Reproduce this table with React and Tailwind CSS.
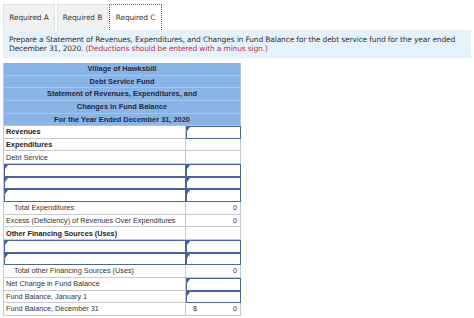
import React from "react";

const HEAD = [
  "Village of Hawksbill",
  "Debt Service Fund",
  "Statement of Revenues, Expenditures, and",
  "Changes in Fund Balance",
  "For the Year Ended December 31, 2020",
];

// kind: "label" | "bold" | "input"; right: "input" for an entry cell
const ROWS = [
  { kind: "bold", text: "Revenues", right: "input" },
  { kind: "bold", text: "Expenditures" },
  { kind: "label", text: "Debt Service" },
  { kind: "input", right: "input" },
  { kind: "input", right: "input" },
  { kind: "input", right: "input" },
  { kind: "label", text: "Total Expenditures", indent: true, value: "0" },
  { kind: "label", text: "Excess (Deficiency) of Revenues Over Expenditures", value: "0" },
  { kind: "bold", text: "Other Financing Sources (Uses)" },
  { kind: "input", right: "input" },
  { kind: "input", right: "input" },
  { kind: "label", text: "Total other Financing Sources (Uses)", indent: true, value: "0" },
  { kind: "label", text: "Net Change in Fund Balance", right: "input" },
  { kind: "label", text: "Fund Balance, January 1", right: "input" },
  { kind: "label", text: "Fund Balance, December 31", value: "0", dollar: true },
];

function Marker() {
  return (
    <span className="absolute left-0 top-0 w-0 h-0 border-t-[4px] border-r-[3px] border-t-[#3b5d96] border-r-transparent" />
  );
}

function Row({ row }) {
  const isInputLeft = row.kind === "input";
  const isInputRight = row.right === "input";
  return (
    <div className="flex h-[12.65px]">
      <div
        className={
          isInputLeft
            ? "relative w-[182px] border border-[#4a6694] bg-white"
            : "relative w-[182px] border-b border-r border-[#c8c8c8] bg-white flex items-center"
        }
      >
        {isInputLeft && <Marker />}
        {!isInputLeft && (
          <span
            className={
              (row.kind === "bold" ? "font-bold text-[#222] " : "text-[#333] ") +
              (row.indent ? "pl-[10px]" : "pl-[2px]") +
              " text-[7.3px] leading-none whitespace-nowrap"
            }
          >
            {row.text}
          </span>
        )}
      </div>
      <div
        className={
          isInputRight
            ? "relative flex-1 border border-[#4a6694] bg-white"
            : "relative flex-1 border-b border-r border-[#c8c8c8] bg-white flex items-center justify-between px-[3px]"
        }
      >
        {isInputRight && <Marker />}
        {!isInputRight && (
          <>
            <span className="text-[7.3px] leading-none text-[#333] pl-[4px]">{row.dollar ? "$" : ""}</span>
            <span className="text-[7.3px] leading-none text-[#333]">{row.value || ""}</span>
          </>
        )}
      </div>
    </div>
  );
}

export default function App() {
  return (
    <div className="w-[474px] h-[318px] bg-white overflow-hidden font-['Liberation_Sans',Arial,sans-serif]">
      {/* tabs */}
      <div className="flex pl-[3px] pt-[4px] h-[30px] font-['DejaVu_Sans',Verdana,sans-serif] text-[7.4px] tracking-[-0.1px] text-[#333]">
        <div className="w-[52px] bg-[#f1f1f1] border border-[#e0e0e0] border-b-0 flex items-center justify-center">
          Required A
        </div>
        <div className="w-[51px] ml-[2px] bg-[#f1f1f1] border border-[#e0e0e0] border-b-0 flex items-center justify-center">
          Required B
        </div>
        <div className="w-[53px] ml-[1px] bg-white border border-dotted border-[#3a5f9a] border-b-0 flex items-center justify-center">
          Required C
        </div>
      </div>

      {/* instructions */}
      <div className="mx-[3px] bg-[#e5f1fb] px-[6px] pt-[5px] pb-[5px] font-['DejaVu_Sans',Verdana,sans-serif] text-[7.5px] tracking-[-0.15px] leading-[9px] text-[#333]">
        Prepare a Statement of Revenues, Expenditures, and Changes in Fund Balance for the debt service fund for the year ended December 31, 2020.{" "}
        <span className="text-[#c0364f]">(Deductions should be entered with a minus sign.)</span>
      </div>

      {/* statement */}
      <div className="ml-[3px] mt-[5px] w-[238px] border-l border-[#c8c8c8]">
        {HEAD.map((h) => (
          <div
            key={h}
            className="h-[12.65px] bg-[#8ab3e6] border-b border-r border-[#a9c6ea] flex items-center justify-center text-[7.4px] font-bold text-[#1e2a44] leading-none"
          >
            {h}
          </div>
        ))}
        {ROWS.map((r, i) => (
          <Row key={i} row={r} />
        ))}
      </div>
    </div>
  );
}
